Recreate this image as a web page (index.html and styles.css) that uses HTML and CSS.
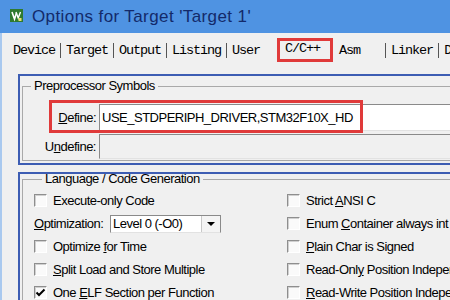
FILE: index.html
```html
<!DOCTYPE html>
<html>
<head>
  <title>Options for Target</title>
  <link rel="stylesheet" href="styles.css">
</head>
<body>
  <div class="titlebar">
    <svg class="app-icon" width="13" height="13" viewBox="0 0 13 13">
      <rect x="0" y="0" width="13" height="13" fill="#2f7a2f"/>
      <polyline points="2,3 4.5,10 6.5,4" fill="none" stroke="#fff" stroke-width="1.6"/>
      <polyline points="6,3 8.2,9 10.5,3" fill="none" stroke="#fff" stroke-width="1.4"/>
      <rect x="8.5" y="9" width="3" height="3" fill="#e8e070"/>
    </svg>
    <span class="title">Options for Target 'Target 1'</span>
  </div>

  <div class="window">
    <div class="tabs">
      <div class="tab">Device</div>
      <div class="tab">Target</div>
      <div class="tab">Output</div>
      <div class="tab">Listing</div>
      <div class="tab tab-user">User</div>
      <div class="tab tab-active">C/C++</div>
      <div class="tab tab-asm">Asm</div>
      <div class="tab">Linker</div>
      <div class="tab tab-last">D</div>
    </div>

    <div class="frame frame-pre">
      <fieldset class="group group-pre">
        <legend>Preprocessor Symbols</legend>
        <div class="sym-row define-row">
          <label><u>D</u>efine:</label>
          <div class="textbox">USE_STDPERIPH_DRIVER,STM32F10X_HD</div>
          <div class="mark"></div>
        </div>
        <div class="sym-row undefine-row">
          <label>U<u>n</u>define:</label>
          <div class="textbox disabled"></div>
        </div>
      </fieldset>
    </div>

    <div class="frame frame-lang">
      <fieldset class="group group-lang">
        <legend>Language / Code Generation</legend>
        <div class="opts">
          <div class="opt"><span class="check"></span><span>Execute-only Code</span></div>
          <div class="opt"><span class="check"></span><span>Strict <u>A</u>NSI C</span></div>

          <div class="opt">
            <span class="opt-label"><u>O</u>ptimization:</span>
            <div class="select">
              <span class="select-text">Level 0 (-O0)</span>
              <span class="select-btn"><span class="tri"></span></span>
            </div>
          </div>
          <div class="opt"><span class="check"></span><span>Enum <u>C</u>ontainer always int</span></div>

          <div class="opt"><span class="check"></span><span>Optimize <u>f</u>or Time</span></div>
          <div class="opt"><span class="check"></span><span><u>P</u>lain Char is Signed</span></div>

          <div class="opt"><span class="check"></span><span><u>S</u>plit Load and Store Multiple</span></div>
          <div class="opt"><span class="check"></span><span>Read-Onl<u>y</u> Position Independent</span></div>

          <div class="opt">
            <span class="check checked">
              <svg width="11" height="11" viewBox="0 0 11 11"><polyline points="1.5,5.5 4,8 9.5,2.5" fill="none" stroke="#000" stroke-width="2"/></svg>
            </span><span>One <u>E</u>LF Section per Function</span>
          </div>
          <div class="opt"><span class="check"></span><span><u>R</u>ead-Write Position Independent</span></div>
        </div>
      </fieldset>
    </div>
  </div>
</body>
</html>
```

FILE: styles.css
```css
body { margin: 0; background: #f0f0f0; font-family: "Liberation Sans", Arial, sans-serif; font-size: 13px; letter-spacing: -0.5px; color: #000; overflow: hidden; width: 450px; height: 300px; }

.titlebar { height: 33px; background: #4f93e2; display: flex; align-items: center; padding-left: 10px; gap: 9px; }
.app-icon { display: block; margin-top: -2px; }
.title { font-size: 17px; letter-spacing: 0.4px; color: #132a6a; }

.window { border-left: 2px solid #a9c9ef; height: 267px; overflow: hidden; }

.tabs { display: flex; align-items: flex-end; height: 24px; margin-top: 5px; padding-left: 6px; font-family: "Liberation Mono", "Courier New", monospace; font-size: 13.5px; letter-spacing: -1.1px; white-space: nowrap; }
.tab { height: 15px; line-height: 15px; padding: 0 5px; border-right: 1px solid #555; margin-bottom: 4px; }
.tab-user { border-right: none; padding-right: 17px; }
.tab-active { height: 24px; box-sizing: border-box; border: 3px solid #e03a3a; margin-bottom: 0; padding: 0 10px 0 5px; line-height: 15px; }
.tab-asm { margin-left: 6px; padding: 0 25px 0 0; }
.tab-last { border-right: none; }

.frame { border: 2px solid #3d5db3; margin-left: 16px; margin-right: -40px; }
.frame-pre { margin-top: 12px; padding: 0 0 2px 2px; }
.frame-lang { margin-top: 7px; padding: 0 0 20px 2px; }

.group { border: 1px solid #a9a9a9; margin: 0; padding: 0; min-width: 0; }
.group legend { margin-left: 8px; padding: 0 3px; line-height: 14px; }
.group-pre { margin-top: 3px; padding: 11px 0 1px 0; }
.group-lang { margin-top: -1px; padding: 4px 0 0 11px; }
.group-lang legend { line-height: 12px; }

.sym-row { display: flex; align-items: center; position: relative; }
.sym-row label { width: 73px; text-align: right; padding-right: 3px; }
.textbox { flex: 1; background: #fff; border: 1px solid #8a8a8a; border-bottom-color: #e2e2e2; border-right: none; padding-left: 2px; box-sizing: border-box; }
.define-row .textbox { height: 27px; line-height: 25px; }
.undefine-row { margin-top: 3px; }
.undefine-row .textbox { height: 25px; }
.textbox.disabled { background: #f0f0f0; }
.mark { position: absolute; left: 26px; width: 314px; box-sizing: border-box; top: -4px; bottom: -2px; border: 3px solid #e03a3a; pointer-events: none; }

.opts { display: grid; grid-template-columns: 253px 1fr; grid-auto-rows: 23px; }
.opt { display: flex; align-items: center; white-space: nowrap; overflow: hidden; }
.check { flex: none; width: 13px; height: 13px; box-sizing: border-box; background: #fafafa; border: 1px solid #fff; border-top-color: #8e8e8e; border-left-color: #8e8e8e; box-shadow: inset 1px 1px 0 #d0d0d0; margin-right: 6px; display: flex; align-items: center; justify-content: center; }
.opt-label { width: 76px; }
.select { width: 111px; height: 18px; box-sizing: border-box; border: 1px solid #8a8a8a; border-bottom-color: #e2e2e2; background: #fff; display: flex; align-items: center; }
.select-text { flex: 1; padding-left: 2px; }
.select-btn { width: 18px; height: 16px; display: flex; align-items: center; justify-content: center; background: #f4f4f4; border-left: 1px solid #c8c8c8; }
.tri { width: 0; height: 0; border-left: 4px solid transparent; border-right: 4px solid transparent; border-top: 4px solid #000; }
```
